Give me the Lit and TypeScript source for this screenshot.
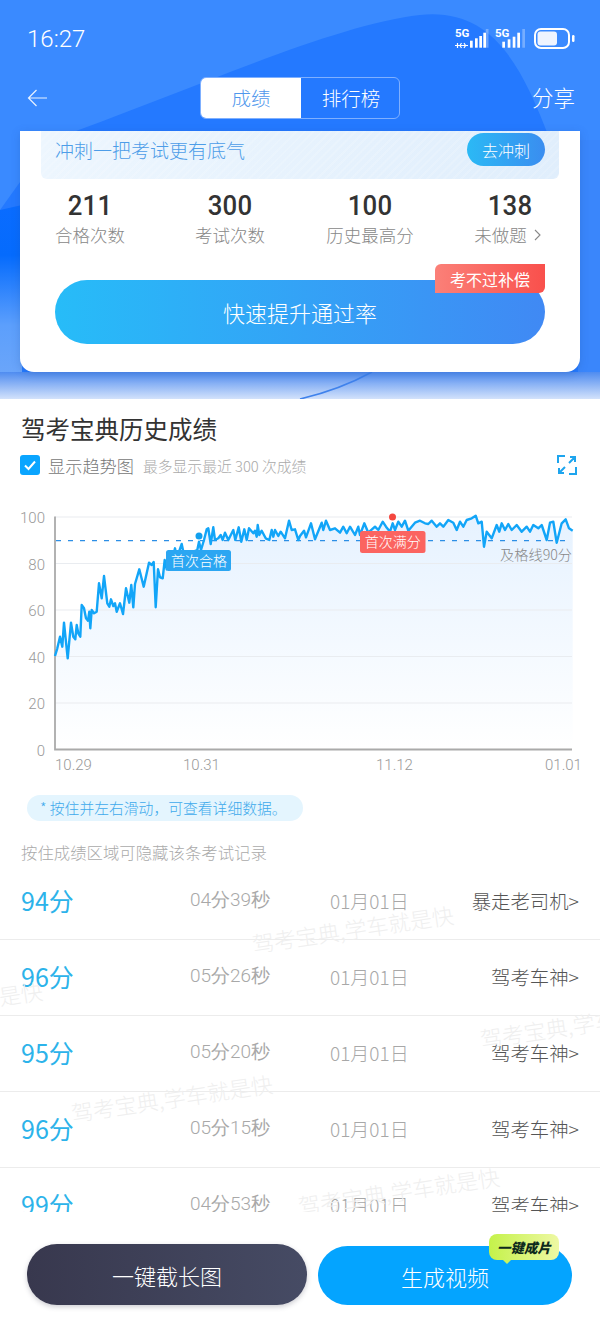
import { LitElement, html, css, svg } from "lit";
import { customElement } from "lit/decorators.js";

// line traced off the chart, [x, y] at 3x relative to the chart box (top = 500)
const LEFT = [165,468,172,445,180,410,187,440,192,368,203,475,213,368,220,410,226,418,230,375,235,400,241,410,245,315,252,325,258,355,264,362,268,335,271,385,275,330,282,340,290,335,297,250,305,295,312,228,322,310,328,320,333,298,340,318,345,310,350,335,360,310,369,342,378,265,388,308,394,255,400,322,405,252,418,208,431,260,447,188,455,195,461,186,467,322,474,208,480,232,488,235,494,180,500,208,510,170,517,180,525,145,530,175,545,132,552,165,565,160,580,155,592,150,597,125,603,150,612,120,620,88,625,85,632,132,640,82,645,120,655,115,662,105,668,120,675,98,685,120,700,90,706,120,716,82,724,125,733,88,740,120,747,85,760,100,765,92,770,110,773,75,778,105,785,92,797,115,808,120,815,90,820,110,825,90,835,108,842,95,855,115,867,62,875,90,885,88,895,120];
const RIGHT = [0,108,12,92,18,112,33,70,45,118,65,68,70,90,78,62,90,90,105,85,120,98,130,80,140,100,150,80,165,105,175,80,180,105,193,70,205,98,225,80,235,90,248,65,258,80,270,95,278,70,285,90,295,65,305,80,315,62,325,92,345,68,360,62,375,70,385,72,395,62,410,80,420,70,430,80,445,60,460,68,470,90,480,65,490,80,500,60,515,55,527,47,535,70,545,65,552,140,560,95,575,115,590,75,598,95,605,70,615,90,625,72,635,90,650,75,665,95,680,80,690,95,700,75,715,85,725,75,740,120,750,68,760,65,770,128,785,70,797,58,807,85,818,92];

const toPoints = (raw: number[], offset: number) => {
  const out: string[] = [];
  for (let i = 0; i < raw.length; i += 2) {
    out.push(`${((raw[i] / 3) + offset).toFixed(1)},${(raw[i + 1] / 3).toFixed(1)}`);
  }
  return out;
};

const LINE = [...toPoints(LEFT, 0), ...toPoints(RIGHT, 300)].join(" ");

const STATS = [
  { value: "211", label: "合格次数" },
  { value: "300", label: "考试次数" },
  { value: "100", label: "历史最高分" },
  { value: "138", label: "未做题", more: true },
];

const ROWS = [
  { score: "94分", time: "04分39秒", date: "01月01日", name: "暴走老司机>" },
  { score: "96分", time: "05分26秒", date: "01月01日", name: "驾考车神>" },
  { score: "95分", time: "05分20秒", date: "01月01日", name: "驾考车神>" },
  { score: "96分", time: "05分15秒", date: "01月01日", name: "驾考车神>" },
  { score: "99分", time: "04分53秒", date: "01月01日", name: "驾考车神>" },
];

const MARKS = [
  { x: 252, y: 63 },
  { x: -159, y: 139 },
  { x: 480, y: 158 },
  { x: 71, y: 232 },
  { x: 298, y: 325 },
];

@customElement("app-root")
export class AppRoot extends LitElement {
  static styles = css`
    :host {
      display: block;
      position: relative;
      width: 600px;
      height: 1326px;
      overflow: hidden;
      background: #fff;
      font-family: "Noto Sans CJK SC", "Noto Sans", sans-serif;
      font-weight: 300;
      color: #333;
    }

    .hero {
      position: relative;
      height: 399px;
      overflow: hidden;
      background: #3a8aff;
    }
    .hero-bg {
      position: absolute;
      inset: 0;
    }
    .status, .nav, .card {
      position: relative;
    }

    .status {
      height: 77px;
      box-sizing: border-box;
      padding: 0 24px 0 27px;
      display: flex;
      align-items: center;
      justify-content: space-between;
      color: #fff;
    }
    .time {
      font-family: Roboto, sans-serif;
      font-size: 24px;
      font-weight: 300;
    }
    .sys {
      display: block;
    }
    .sys text {
      font-family: Roboto, sans-serif;
      font-size: 11.5px;
      font-weight: 700;
      fill: #fff;
    }

    .nav {
      height: 42px;
      display: grid;
      grid-template-columns: 200px 200px 200px;
      align-items: center;
      color: #fff;
    }
    .nav svg {
      margin-left: 27px;
      display: block;
    }
    .tabs {
      display: grid;
      grid-template-columns: 100px 100px;
      height: 42px;
      box-sizing: border-box;
      border: 1px solid #7fb0ff;
      border-radius: 6px;
      overflow: hidden;
      font-size: 19.5px;
    }
    .tabs span {
      display: flex;
      align-items: center;
      justify-content: center;
      padding-bottom: 2px;
    }
    .tabs .on {
      background: #fff;
      color: #4f97ec;
    }
    .share {
      justify-self: end;
      margin-right: 25px;
      padding-bottom: 3px;
      font-size: 21.5px;
    }

    .card {
      margin: 12px 20px 0;
      height: 241px;
      box-sizing: border-box;
      background: #fff;
      border-radius: 0 0 14px 14px;
      box-shadow: 0 2px 8px rgba(30, 80, 160, 0.25);
    }
    .promo {
      margin: 0 21px;
      height: 48px;
      box-sizing: border-box;
      padding: 2px 14px 13px;
      display: flex;
      align-items: center;
      justify-content: space-between;
      border-radius: 0 0 6px 6px;
      background:
        repeating-linear-gradient(135deg, rgba(255, 255, 255, 0.14) 0 2px, rgba(255, 255, 255, 0) 2px 6px),
        linear-gradient(90deg, #edf6fe, #e0eefc);
      color: #4d9de8;
      font-size: 19px;
    }
    .promo b {
      width: 78px;
      height: 33px;
      border-radius: 17px;
      display: flex;
      align-items: center;
      justify-content: center;
      font-weight: 300;
      font-size: 16px;
      color: #fff;
      background: linear-gradient(90deg, #2bb9f5, #3a8df0);
    }

    .stats {
      display: grid;
      grid-template-columns: repeat(4, 140px);
      margin-top: 11px;
      text-align: center;
    }
    .stats b {
      display: block;
      font-family: Roboto, sans-serif;
      font-weight: 500;
      font-size: 28px;
      line-height: 32px;
      letter-spacing: 0.2px;
      color: #333;
      transform: scaleX(0.92);
    }
    .stats span {
      display: flex;
      align-items: center;
      justify-content: center;
      gap: 7px;
      font-size: 17.5px;
      line-height: 26px;
      color: #888;
    }
    .stats .more {
      margin-right: 5px;
    }

    .cta {
      position: relative;
      margin: 32px 35px 0;
      height: 64px;
      border-radius: 32px;
      display: flex;
      align-items: center;
      justify-content: center;
      color: #fff;
      font-size: 22px;
      background: linear-gradient(90deg, #27bcf8, #4089f4);
    }
    .cta i {
      position: absolute;
      right: 0;
      top: -16px;
      width: 110px;
      height: 29px;
      display: flex;
      align-items: center;
      justify-content: center;
      font-style: normal;
      font-size: 16px;
      font-weight: 400;
      border-radius: 6px 0 6px 0;
      background: linear-gradient(90deg, #fb8078, #f9504c);
    }

    .head {
      padding: 12px 23px 0 20px;
    }
    .head h2 {
      margin: 0;
      padding-left: 1px;
      font-size: 24.5px;
      line-height: 36px;
      font-weight: 400;
      color: #333;
    }
    .opt {
      display: flex;
      align-items: center;
      margin-top: 8px;
      height: 20px;
    }
    .check {
      display: block;
      width: 20px;
      height: 20px;
      margin-right: 8px;
    }
    .opt span {
      font-size: 17.2px;
      color: #777;
    }
    .opt small {
      margin-left: 9px;
      font-size: 14.8px;
      color: #aaa;
    }
    .opt .expand {
      margin-left: auto;
      display: block;
    }

    .chart {
      display: block;
      margin-top: 25px;
      width: 600px;
      height: 280px;
    }
    .chart text {
      font-family: "Noto Sans CJK SC", sans-serif;
      font-weight: 300;
    }
    .chart .ax {
      font-family: Roboto, sans-serif;
      font-size: 15px;
      fill: #999;
    }
    .chart .tag {
      font-size: 14px;
      fill: #fff;
    }
    .chart .pass {
      font-size: 14.2px;
      fill: #888;
    }

    .tip {
      display: inline-block;
      margin: 15px 0 0 27px;
      width: 276px;
      height: 26px;
      box-sizing: border-box;
      padding-left: 13px;
      border-radius: 13px;
      background: #e4f5fe;
      color: #3eaaec;
      font-size: 14.8px;
      line-height: 26px;
      white-space: nowrap;
    }
    .hint {
      margin: 19px 0 0 21px;
      font-size: 16.4px;
      line-height: 24px;
      color: #aaa;
    }

    .list {
      position: absolute;
      top: 864px;
      left: 0;
      width: 600px;
      height: 348px;
      overflow: hidden;
    }
    .row {
      height: 76px;
      box-sizing: border-box;
      padding: 0 21px 3px;
      border-bottom: 1px solid #ececec;
      display: grid;
      grid-template-columns: 169px 140px 1fr auto;
      align-items: center;
      white-space: nowrap;
      font-variant-numeric: tabular-nums;
    }
    .row .score {
      font-size: 25px;
      font-weight: 400;
      color: #2cb3ea;
    }
    .row .time, .row .date {
      font-size: 19px;
      color: #a8a8a8;
    }
    .row .name {
      font-size: 19.4px;
      color: #555;
    }
    .mark {
      position: absolute;
      font-size: 22px;
      color: #efefef;
      white-space: nowrap;
      transform: rotate(-8.4deg);
      transform-origin: left center;
    }

    .foot {
      position: absolute;
      left: 0;
      top: 1212px;
      width: 600px;
      height: 114px;
      box-sizing: border-box;
      padding: 32px 27px 0;
      display: flex;
      gap: 11px;
      align-items: flex-end;
      background: #fff;
    }
    .foot > div {
      position: relative;
      margin-bottom: 21px;
      display: flex;
      align-items: center;
      justify-content: center;
      color: #fff;
      font-size: 22px;
    }
    .dark {
      width: 280px;
      height: 61px;
      border-radius: 30px;
      background: linear-gradient(90deg, #38384e, #464b64);
      box-shadow: 0 2px 5px rgba(60, 60, 80, 0.25);
    }
    .video {
      width: 254px;
      height: 59px;
      border-radius: 30px;
      background: #04a4ff;
    }
    .badge {
      position: absolute;
      right: 13px;
      top: -12px;
      width: 70px;
      height: 26px;
      border-radius: 8px;
      display: flex;
      align-items: center;
      justify-content: center;
      background: linear-gradient(90deg, #c4f24a, #eef8a4);
      color: #0d2a1c;
      font-size: 13.5px;
      font-weight: 900;
      font-style: italic;
    }
    .badge::after {
      content: "";
      position: absolute;
      left: 14px;
      bottom: -4px;
      border: 4px solid transparent;
      border-bottom: 0;
      border-top-color: #cbf35c;
    }
  `;

  private _bars(xs: number[], tops: number[], faintX: number) {
    return svg`
      ${xs.map((x, i) => svg`<rect x=${x} y=${tops[i]} width="2.700" height=${21.7 - tops[i]} fill="#fff" />`)}
      <rect x=${faintX} y="3" width="2.700" height="18.700" fill="#fff" opacity="0.3" />
    `;
  }

  private _sysIcons() {
    return html`<svg class="sys" width="122" height="26" viewBox="0 0 122 26">
      <text x="1" y="11">5G</text>
      <path d="M1 19.500h13M3.500 17v5M7.500 17l-1.500 2.500 1.500 2.500M10 17l1.500 2.500-1.500 2.500" stroke="#fff" stroke-width="1.200" fill="none" />
      ${this._bars([16, 21, 25.3, 29.3], [14.7, 12.3, 10, 6.7], 31.8)}
      <text x="41" y="11">5G</text>
      ${this._bars([48.3, 53.7, 58.7, 63.3], [15.7, 13.3, 10.7, 6.7], 68.3)}
      <rect x="81" y="3" width="34" height="19" rx="6" fill="none" stroke="#fff" stroke-width="2" />
      <rect x="83.500" y="5.500" width="19.500" height="14" rx="3" fill="#eef4ff" />
      <rect x="118" y="9" width="2.500" height="7" rx="1.200" fill="#fff" />
    </svg>`;
  }

  private _heroBg() {
    return svg`<svg class="hero-bg" width="600" height="399" viewBox="0 0 600 399">
      <defs>
        <linearGradient id="side" gradientUnits="userSpaceOnUse" x1="0" y1="205" x2="0" y2="372">
          <stop offset="0" stop-color="#0a6cff" />
          <stop offset="0.3" stop-color="#056bfd" />
          <stop offset="0.72" stop-color="#5c9ffc" />
          <stop offset="1" stop-color="#6aa5fa" />
        </linearGradient>
        <linearGradient id="fade" x1="0" y1="0" x2="0" y2="1">
          <stop offset="0" stop-color="#4f8cf0" />
          <stop offset="1" stop-color="#d3e2fb" />
        </linearGradient>
      </defs>
      <path d="M50 140C180 95 330 25 420 15C490 8 520 60 550 140C560 170 580 200 600 220V399H0V210Z" fill="#2479ff" />
      <path d="M0 210L22 205V372H0Z" fill="url(#side)" />
      <path d="M578 140H600V372H578Z" fill="#3a86fb" />
      <path d="M0 372H600V399H0Z" fill="url(#fade)" />
      <path d="M300 399C330 392 350 384 372 372" stroke="#3f82ec" stroke-width="1.500" fill="none" />
    </svg>`;
  }

  private _chart() {
    const grid = [17, 63.5, 110, 156.5, 203];
    const yLabels: [string, number][] = [["100", 23], ["80", 70], ["60", 116], ["40", 163], ["20", 209], ["0", 256]];
    const xLabels: [string, number][] = [["10.29", 55], ["10.31", 183], ["11.12", 376], ["01.01", 545]];
    return svg`<svg class="chart" viewBox="0 0 600 280">
      <defs>
        <linearGradient id="area" x1="0" y1="0" x2="0" y2="1">
          <stop offset="0" stop-color="#e6f2ff" />
          <stop offset="1" stop-color="#ffffff" />
        </linearGradient>
      </defs>
      <polygon points="55,249.5 ${LINE} 572.7,249.5" fill="url(#area)" />
      ${grid.map((y) => svg`<line x1="55" x2="572" y1=${y} y2=${y} stroke="#e9ecf0" stroke-width="1.200" />`)}
      <path d="M55 16.5V249.5H572" fill="none" stroke="#aaa" stroke-width="1.800" />
      ${yLabels.map(([t, y]) => svg`<text class="ax" x="45" y=${y} text-anchor="end">${t}</text>`)}
      ${xLabels.map(([t, x]) => svg`<text class="ax" x=${x} y="270">${t}</text>`)}
      <line x1="56" x2="572" y1="40.7" y2="40.7" stroke="#2c8fe6" stroke-width="1.300" stroke-dasharray="5 7" />
      <polyline points=${LINE} fill="none" stroke="#12a5f8" stroke-width="2.400" stroke-linejoin="round" />
      <circle cx="199" cy="36" r="3.500" fill="#12a0ee" />
      <rect x="166" y="50" width="65" height="21" rx="2.500" fill="#2ba6f2" />
      <text class="tag" x="199" y="65.500" text-anchor="middle">首次合格</text>
      <circle cx="392.500" cy="17" r="3.500" fill="#f4473f" />
      <rect x="360" y="31" width="65.500" height="22" rx="2.500" fill="#fb6460" />
      <text class="tag" x="392.700" y="47" text-anchor="middle">首次满分</text>
      <text class="pass" x="572" y="60" text-anchor="end">及格线90分</text>
    </svg>`;
  }

  render() {
    return html`
      <div class="hero">
        ${this._heroBg()}
        <div class="status">
          <span class="time">16:27</span>
          ${this._sysIcons()}
        </div>
        <div class="nav">
          <svg width="22" height="20" viewBox="0 0 22 20">
            <path d="M20 10H1.500M9.500 2l-8 8 8 8" fill="none" stroke="#e8f1ff" stroke-width="1.200" />
          </svg>
          <div class="tabs"><span class="on">成绩</span><span>排行榜</span></div>
          <span class="share">分享</span>
        </div>
        <div class="card">
          <div class="promo">冲刺一把考试更有底气<b>去冲刺</b></div>
          <div class="stats">
            ${STATS.map((s) => html`<div>
              <b>${s.value}</b>
              <span>${s.label}${s.more
                ? html`<svg class="more" width="7" height="12" viewBox="0 0 7 12"><path d="M1 1l5 5-5 5" fill="none" stroke="#888" stroke-width="1.100" /></svg>`
                : ""}</span>
            </div>`)}
          </div>
          <div class="cta">快速提升通过率<i>考不过补偿</i></div>
        </div>
      </div>

      <div class="head">
        <h2>驾考宝典历史成绩</h2>
        <div class="opt">
          <svg class="check" viewBox="0 0 20 20">
            <rect width="20" height="20" rx="3" fill="#0aa5ff" />
            <path d="M5 10.500l3.500 3.500 6.500-7.500" fill="none" stroke="#fff" stroke-width="2" />
          </svg>
          <span>显示趋势图</span>
          <small>最多显示最近 300 次成绩</small>
          <svg class="expand" width="20" height="20" viewBox="0 0 20 20">
            <path d="M1 8V1h7M19 12v7h-7M13 2h5v5M18 2l-6 6M2 13v5h5M2 18l6-6" fill="none" stroke="#1ea5ee" stroke-width="2" />
          </svg>
        </div>
      </div>

      ${this._chart()}

      <div class="tip">* 按住并左右滑动，可查看详细数据。</div>
      <div class="hint">按住成绩区域可隐藏该条考试记录</div>

      <div class="list">
        ${ROWS.map((r) => html`<div class="row">
          <span class="score">${r.score}</span>
          <span class="time">${r.time}</span>
          <span class="date">${r.date}</span>
          <span class="name">${r.name}</span>
        </div>`)}
        ${MARKS.map((m) => html`<span class="mark" style="left:${m.x}px;top:${m.y}px">驾考宝典,学车就是快</span>`)}
      </div>

      <div class="foot">
        <div class="dark">一键截长图</div>
        <div class="video">生成视频<span class="badge">一键成片</span></div>
      </div>
    `;
  }
}
